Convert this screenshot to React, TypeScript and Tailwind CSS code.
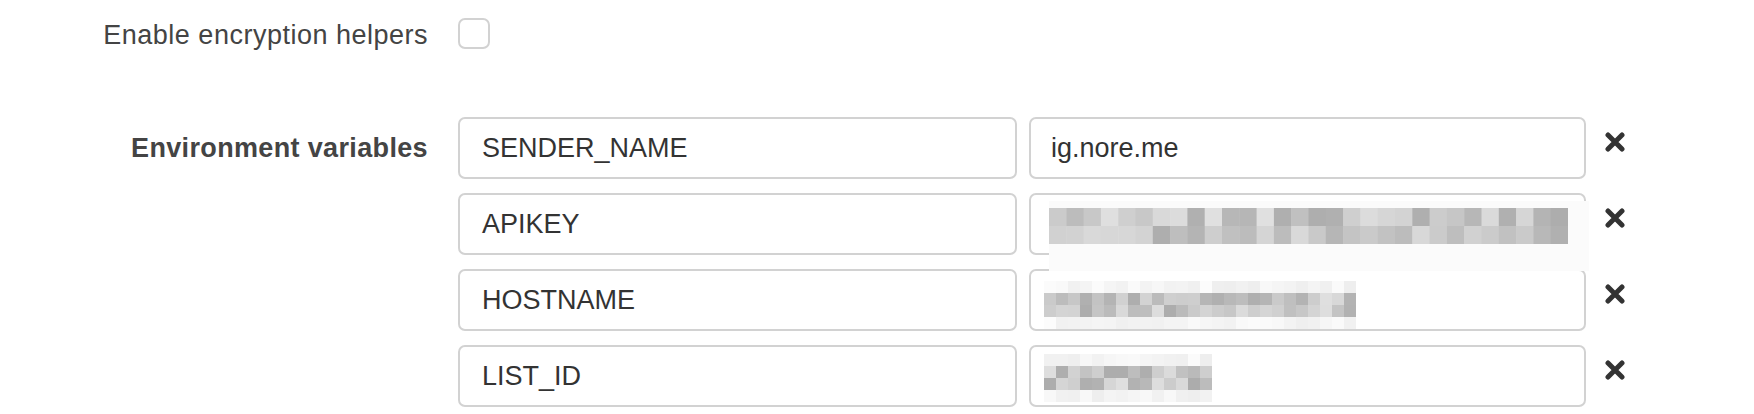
import React from "react";

// small seeded generator so the blurred (pixelated) values look the same on every render
const makeRand = (seed: number) => {
  let s = seed;
  return () => {
    s = (s * 1103515245 + 12345) % 2147483648;
    return s / 2147483648;
  };
};

type MosaicProps = {
  cols: number;
  rows: number;
  cw: number;
  ch: number;
  seed: number;
  halo?: number;
};

const Mosaic: React.FC<MosaicProps> = ({ cols, rows, cw, ch, seed, halo = 1 }) => {
  const rand = makeRand(seed);
  const totalRows = rows + halo * 2;
  const cells: React.ReactNode[] = [];
  for (let r = 0; r < totalRows; r++) {
    for (let c = 0; c < cols; c++) {
      const inner = r >= halo && r < halo + rows;
      const v = inner
        ? Math.round(172 + rand() * 52)
        : Math.round(238 + rand() * 14);
      cells.push(
        <rect
          key={`${r}-${c}`}
          x={c * cw}
          y={r * ch}
          width={cw + 0.5}
          height={ch + 0.5}
          fill={`rgb(${v},${v},${v})`}
        />
      );
    }
  }
  return (
    <svg width={cols * cw} height={totalRows * ch} className="block">
      {cells}
    </svg>
  );
};

const CloseIcon = () => (
  <svg width="20" height="20" viewBox="0 0 20 20" className="block">
    <path
      d="M3 3 L17 17 M17 3 L3 17"
      stroke="#333"
      strokeWidth="5"
      strokeLinecap="round"
      fill="none"
    />
  </svg>
);

const rows = [
  { key: "SENDER_NAME", value: "ig.nore.me" },
  { key: "APIKEY", value: "" },
  { key: "HOSTNAME", value: "" },
  { key: "LIST_ID", value: "" },
];

const App: React.FC = () => {
  return (
    <div className="w-[1754px] h-[414px] overflow-hidden bg-white font-['Liberation_Sans',Arial,sans-serif] text-[#444]">
      <div className="flex items-center pt-[18px]">
        <div className="w-[428px] pt-[4px] text-right text-[27px] leading-none tracking-[0.5px]">
          Enable encryption helpers
        </div>
        <div className="ml-[30px] w-[32px] h-[31px] rounded-[7px] border-2 border-[#d2d2d2] bg-white" />
      </div>

      <div className="flex mt-[68px]">
        <div className="w-[428px] h-[62px] flex items-center justify-end text-[27px] font-bold leading-none tracking-[0.35px]">
          Environment variables
        </div>
        <div className="ml-[30px] flex flex-col gap-[14px]">
          {rows.map((row, i) => (
            <div key={row.key} className="flex items-start">
              <div className="w-[559px] h-[62px] rounded-[7px] border-2 border-[#d2d2d2] px-[22px] flex items-center text-[27px] leading-none text-[#333]">
                {row.key}
              </div>
              <div className="relative ml-[12px] w-[557px] h-[62px] rounded-[7px] border-2 border-[#d2d2d2] px-[20px] flex items-center text-[27px] leading-none text-[#333]">
                {row.value}
                {i === 1 && (
                  <div className="absolute left-[18px] top-[6px] z-10 w-[540px] h-[70px] bg-[#fbfbfb]">
                    <div className="pt-[7px]">
                      <Mosaic cols={30} rows={2} cw={17.3} ch={18} seed={7} halo={0} />
                    </div>
                  </div>
                )}
                {i === 2 && (
                  <div className="absolute left-[13px] top-[10px]">
                    <Mosaic cols={26} rows={2} cw={12} ch={12} seed={31} />
                  </div>
                )}
                {i === 3 && (
                  <div className="absolute left-[13px] top-[7px]">
                    <Mosaic cols={14} rows={2} cw={12} ch={12} seed={53} />
                  </div>
                )}
              </div>
              <div className="ml-[19px] mt-[15px]">
                <CloseIcon />
              </div>
            </div>
          ))}
        </div>
      </div>
    </div>
  );
};

export default App;
